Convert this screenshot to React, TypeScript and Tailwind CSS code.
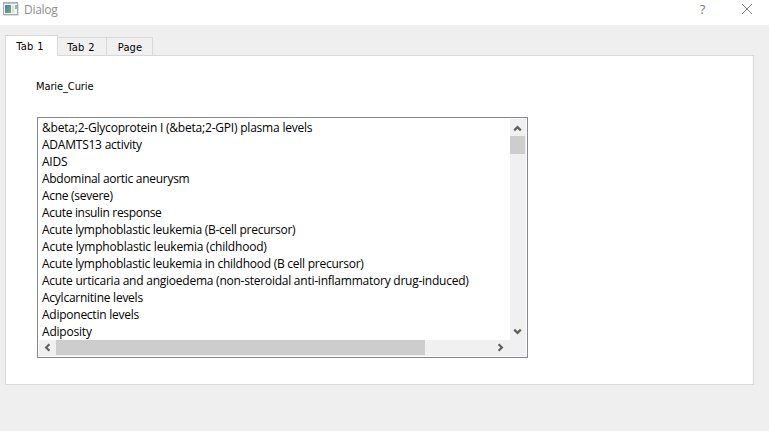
const rows: { text: string; tracking: string }[] = [
  { text: "&beta;2-Glycoprotein I (&beta;2-GPI) plasma levels", tracking: "tracking-[-0.21px]" },
  { text: "ADAMTS13 activity", tracking: "tracking-[-0.23px]" },
  { text: "AIDS", tracking: "tracking-[-0.25px]" },
  { text: "Abdominal aortic aneurysm", tracking: "tracking-[-0.29px]" },
  { text: "Acne (severe)", tracking: "tracking-[-0.29px]" },
  { text: "Acute insulin response", tracking: "tracking-[-0.32px]" },
  { text: "Acute lymphoblastic leukemia (B-cell precursor)", tracking: "tracking-[-0.25px]" },
  { text: "Acute lymphoblastic leukemia (childhood)", tracking: "tracking-[-0.2px]" },
  { text: "Acute lymphoblastic leukemia in childhood (B cell precursor)", tracking: "tracking-[-0.25px]" },
  { text: "Acute urticaria and angioedema (non-steroidal anti-inflammatory drug-induced)", tracking: "tracking-[-0.24px]" },
  { text: "Acylcarnitine levels", tracking: "tracking-[-0.25px]" },
  { text: "Adiponectin levels", tracking: "tracking-[-0.25px]" },
  { text: "Adiposity", tracking: "tracking-[-0.2px]" },
];

function Chevron({ className }: { className: string }) {
  return (
    <svg className={className} width="9" height="7" viewBox="0 0 9 7" aria-hidden="true">
      <path d="M1.2 5.4 4.5 2.1 7.8 5.4" fill="none" stroke="#606060" strokeWidth="2.2" />
    </svg>
  );
}

function TitleBar() {
  return (
    <header className="flex h-[25px] shrink-0 items-start bg-white">
      <svg className="mt-[2px] ml-[3px] shrink-0" width="16" height="14" viewBox="0 0 16 14" aria-hidden="true">
        <defs>
          <linearGradient id="pane" x1="0" y1="0" x2="1" y2="1">
            <stop offset="0" stopColor="#5080ad" />
            <stop offset="1" stopColor="#68b078" />
          </linearGradient>
        </defs>
        <rect x="0.5" y="0.5" width="14" height="12" fill="#f5f5f5" stroke="#a5abb0" />
        <path d="M1 1.5H14" stroke="#b9c9d6" />
        <rect x="2" y="3" width="6" height="8" fill="url(#pane)" />
        <rect x="9" y="3" width="2" height="8" fill="#d9dddd" />
        <rect x="12" y="3" width="2" height="4" fill="#8db8a6" />
        <path d="M15.5 2V13.5H1" fill="none" stroke="#dedede" />
      </svg>
      <h1 className="ml-[5px] font-['Open_Sans','Noto_Sans',sans-serif] text-[12px] leading-[20px] tracking-[-0.3px] text-[#8f8f8f]">
        Dialog
      </h1>
      <div className="ml-auto flex">
        <button className="mr-[35px] w-[9px] font-['Open_Sans','Noto_Sans',sans-serif] text-[13px] leading-[19px] text-[#777777]" aria-label="Help">
          ?
        </button>
        <button className="mt-[4px] mr-[17px] h-[10px] w-[10px]" aria-label="Close">
          <svg width="10" height="10" viewBox="0 0 10 10">
            <path d="M0 0 10 10M10 0 0 10" stroke="#858585" strokeWidth="1" />
          </svg>
        </button>
      </div>
    </header>
  );
}

function Tabs() {
  return (
    <nav className="flex h-[21px] items-end pl-[5px] text-[11px] leading-[13px]">
      <button className="z-10 h-[21px] w-[53px] border border-b-0 border-[#d9d9d9] bg-white pt-px pr-[3px] tracking-[0.3px]">Tab 1</button>
      <button className="h-[19px] w-[49px] border-t border-r border-b border-[#d9d9d9] bg-[#f0f0f0] pt-[2px] pr-[2px] tracking-[0.3px]">Tab 2</button>
      <button className="h-[19px] w-[46px] border-t border-r border-b border-[#d9d9d9] bg-[#f0f0f0] pt-[2px] pl-px tracking-[0.1px]">Page</button>
    </nav>
  );
}

function PhenotypeList() {
  return (
    <div className="flex h-[241px] w-[491px] flex-col border border-[#828790] bg-white p-px">
      <div className="flex h-[221px]">
        <ul className="w-[471px] overflow-hidden pl-[3px] font-['Open_Sans','Noto_Sans',sans-serif] text-[12px] leading-[17px] whitespace-nowrap">
          {rows.map((row) => (
            <li key={row.text} className="h-[17px]">
              <span className={row.tracking}>{row.text}</span>
            </li>
          ))}
        </ul>
        <div className="flex w-[16px] flex-col bg-[#f0f0f0]">
          <div className="flex h-[17px] w-[15px] shrink-0 items-center justify-center pt-px">
            <Chevron className="" />
          </div>
          <div className="h-[18px] w-[15px] bg-[#cdcdcd]" />
          <div className="mt-auto flex h-[17px] w-[15px] items-center justify-center pb-px">
            <Chevron className="rotate-180" />
          </div>
        </div>
      </div>
      <div className="flex h-[16px] bg-[#f0f0f0]">
        <div className="flex h-[15px] w-[17px] items-center justify-center">
          <Chevron className="-rotate-90" />
        </div>
        <div className="h-[15px] w-[369px] bg-[#cdcdcd]" />
        <div className="mr-[17px] ml-auto flex h-[15px] w-[17px] items-center justify-center">
          <Chevron className="rotate-90" />
        </div>
      </div>
    </div>
  );
}

export default function App() {
  return (
    <div className="flex h-[431px] w-[769px] flex-col overflow-hidden bg-[#efefef] font-['DejaVu_Sans_Condensed','DejaVu_Sans',sans-serif] text-black">
      <TitleBar />
      <main className="pt-[10px]">
        <Tabs />
        <section className="-mt-px ml-[5px] h-[330px] w-[749px] border border-[#d9d9d9] bg-white pl-[31px]">
          <p className="pt-[24px] text-[11px] leading-[13px] tracking-[-0.1px]">
            <span className="-ml-px">Marie_Curie</span>
          </p>
          <div className="mt-[24px]">
            <PhenotypeList />
          </div>
        </section>
      </main>
    </div>
  );
}
